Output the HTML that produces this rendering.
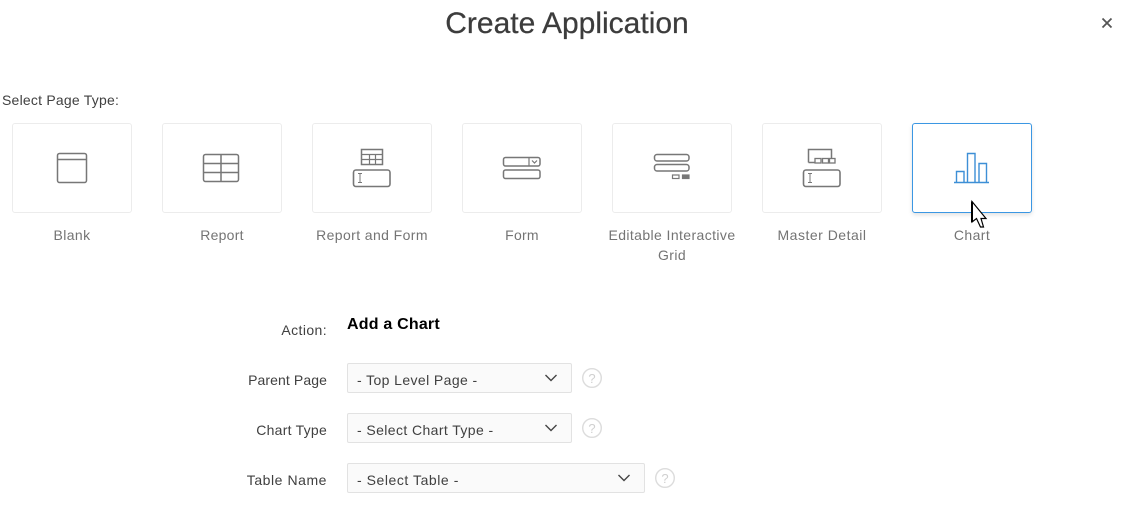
<!DOCTYPE html>
<html>
<head>
<meta charset="utf-8">
<style>
html,body{margin:0;padding:0;background:#fff;}
body{width:1124px;height:513px;position:relative;overflow:hidden;font-family:"Liberation Sans",Arial,sans-serif;}
.a{position:absolute;white-space:nowrap;}
.card{position:absolute;top:123px;width:118px;height:88px;border:1px solid #ececec;border-radius:3px;background:#fff;}
.card.sel{border-color:#3b97e3;box-shadow:0 2px 4px rgba(0,0,0,.12);}
.lbl{position:absolute;width:150px;text-align:center;font-size:14px;line-height:20px;color:#747474;letter-spacing:.4px;top:225px;}
.fl{position:absolute;right:797px;font-size:14px;line-height:20px;color:#404040;white-space:nowrap;}
.sel-box{position:absolute;left:347px;height:28px;border:1px solid #e2e2e2;border-radius:2px;background:#fafafa;}
.sel-box span{position:absolute;left:9px;top:6px;font-size:14px;line-height:20px;color:#404040;letter-spacing:.4px;white-space:nowrap;}
svg{position:absolute;left:0;top:0;overflow:visible;}
</style>
</head>
<body>
<div class="a" style="left:0;width:1134px;top:6px;text-align:center;font-size:30px;line-height:36px;color:#3c3c3c;-webkit-text-stroke:.25px #3c3c3c;">Create Application</div>
<div class="a" style="left:2px;top:90px;font-size:14px;line-height:20px;color:#404040;letter-spacing:.22px;">Select Page Type:</div>

<div class="card" style="left:12px"></div>
<div class="card" style="left:162px"></div>
<div class="card" style="left:312px"></div>
<div class="card" style="left:462px"></div>
<div class="card" style="left:612px"></div>
<div class="card" style="left:762px"></div>
<div class="card sel" style="left:912px"></div>

<div class="lbl" style="left:-3px">Blank</div>
<div class="lbl" style="left:147px;letter-spacing:.25px">Report</div>
<div class="lbl" style="left:297px">Report and Form</div>
<div class="lbl" style="left:447px;letter-spacing:.25px">Form</div>
<div class="lbl" style="left:597px">Editable Interactive<br>Grid</div>
<div class="lbl" style="left:747px;letter-spacing:.5px">Master Detail</div>
<div class="lbl" style="left:897px">Chart</div>

<div class="fl" style="top:320px;letter-spacing:.4px">Action:</div>
<div class="a" style="left:347px;top:315px;font-size:16px;line-height:20px;font-weight:bold;color:#000;letter-spacing:.2px;">Add a Chart</div>
<div class="fl" style="top:370px;letter-spacing:.1px">Parent Page</div>
<div class="fl" style="top:420px;letter-spacing:.25px">Chart Type</div>
<div class="fl" style="top:470px;letter-spacing:.55px">Table Name</div>

<div class="sel-box" style="top:363px;width:223px"><span>- Top Level Page -</span></div>
<div class="sel-box" style="top:413px;width:223px"><span>- Select Chart Type -</span></div>
<div class="sel-box" style="top:463px;width:296px"><span style="letter-spacing:.55px">- Select Table -</span></div>

<svg width="1124" height="513" viewBox="0 0 1124 513" fill="none">
  <!-- close -->
  <path d="M1102.500 18.500L1111.500 27.500M1111.500 18.500L1102.500 27.500" stroke="#555" stroke-width="1.800"/>

  <g stroke="#777" stroke-width="1.500">
    <!-- blank -->
    <rect x="57.500" y="153.500" width="29" height="29" rx="2"/>
    <path d="M57.500 159.500H86.500"/>
    <!-- report -->
    <rect x="203.500" y="154.500" width="35" height="27" rx="2"/>
    <path d="M203.500 163.500H238.500M203.500 172.500H238.500M221 154.500V181.500"/>
    <!-- report and form -->
    <rect x="361.500" y="149.500" width="21" height="15"/>
    <path d="M361.500 154.500H382.500M361.500 159.500H382.500M369.500 154.500V164.500M375.500 154.500V164.500" stroke-width="1.200"/>
    <rect x="353.500" y="170" width="36.500" height="16.500" rx="2.500" stroke-width="1.600"/>
    <path d="M358 173.500H362M358 182.500H362M360 173.500V182.500" stroke-width="1"/>
    <!-- form -->
    <rect x="503.500" y="157.500" width="36.500" height="8.500" rx="2"/>
    <path d="M529 157.500V166M532 160.500L534.500 163L537 160.500" stroke-width="1.200"/>
    <rect x="503.500" y="170" width="36.500" height="8.500" rx="2"/>
    <!-- editable IG -->
    <rect x="654.500" y="154.500" width="34.500" height="6.500" rx="2.500"/>
    <rect x="654.500" y="164.500" width="34.500" height="6.500" rx="2.500"/>
    <rect x="672.500" y="175" width="6.500" height="3.500" stroke-width="1.200"/>
    <rect x="682.500" y="175" width="6.500" height="3.500" fill="#777" stroke-width="1.200"/>
    <!-- master detail -->
    <path d="M808.500 162.500V149.500H831.500V158.500M808.500 162.500H814.500"/>
    <rect x="815" y="158.500" width="6" height="4.500" stroke-width="1.300"/>
    <rect x="822.500" y="158.500" width="6" height="4.500" stroke-width="1.300"/>
    <rect x="829.500" y="158.500" width="5.500" height="4.500" stroke-width="1.300"/>
    <rect x="803.500" y="170" width="36.500" height="16.500" rx="2.500" stroke-width="1.600"/>
    <path d="M808 173.500H812M808 182.500H812M810 173.500V182.500" stroke-width="1"/>
  </g>

  <!-- chart -->
  <g stroke="#3d8fd6" stroke-width="1.400">
    <path d="M956.500 182V171.500H964V182M967.500 182V153.500H975V182M979 182V163.500H986.500V182"/>
    <path d="M954 182.500H989"/>
  </g>

  <!-- chevrons -->
  <g stroke="#444" stroke-width="1.400">
    <path d="M545.500 375L551 380.500L556.500 375"/>
    <path d="M545.500 425L551 430.500L556.500 425"/>
    <path d="M618.500 475L624 480.500L629.500 475"/>
  </g>

  <!-- help -->
  <g stroke="#dcdcdc" stroke-width="1.400">
    <circle cx="592" cy="378" r="9.300"/>
    <circle cx="592" cy="428" r="9.300"/>
    <circle cx="665" cy="478" r="9.300"/>
  </g>
  <g font-family="Liberation Sans, sans-serif" font-size="13" fill="#d0d0d0" text-anchor="middle">
    <text x="592" y="383">?</text>
    <text x="592" y="433">?</text>
    <text x="665" y="483">?</text>
  </g>

  <!-- cursor -->
  <path d="M972 201.500V222L976.500 218.500L980.500 227H983.500L981 218.500H986Z" fill="#fff" stroke="#000" stroke-width="1.200"/>
  <path d="M972 201.500V222" stroke="#000" stroke-width="2"/>
</svg>
</body>
</html>
